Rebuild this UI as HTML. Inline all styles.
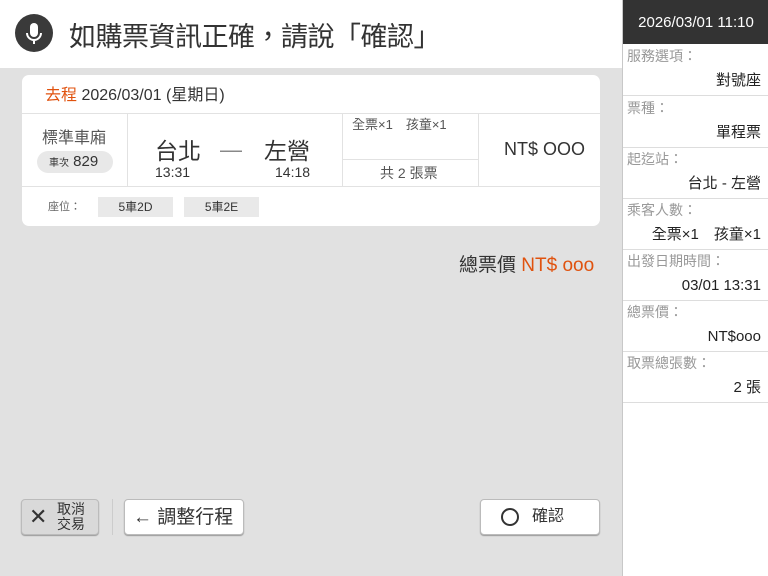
<!DOCTYPE html>
<html><head><meta charset="utf-8"><style>
*{margin:0;padding:0;box-sizing:border-box;line-height:1}
body{width:768px;height:576px;overflow:hidden;background:#e1e1e1;font-family:"Liberation Sans","Noto Sans CJK TC",sans-serif;color:#333;position:relative}
.a{position:absolute;white-space:nowrap}
#hdr{left:0;top:0;width:622px;height:68px;background:#fff}
#side{left:622px;top:0;width:146px;height:576px;background:#fff;border-left:1px solid #c8c8c8}
.card{left:22px;top:75px;width:578px;height:151px;background:#fff;border-radius:7px}
.l{position:absolute;background:#e2e2e2}
.sr{position:absolute;left:0;width:146px;height:52px;border-bottom:1px solid #ddd}
.sr .k{position:absolute;left:4px;top:5px;font-size:14px;color:#999}
.sr .v{position:absolute;right:8px;top:29px;font-size:15px;color:#222}
.btn{position:absolute;background:#fff;border:1px solid #bbb;border-radius:4px;box-shadow:0 1px 1px #999}
</style></head><body>
<div class="a" id="hdr"></div>
<div class="a" style="left:15px;top:14px;width:38px;height:38px;border-radius:50%;background:#3a3a3a">
<svg width="38" height="38" viewBox="0 0 38 38"><rect x="15" y="9" width="8" height="14" rx="4" fill="#fff"/><path d="M12 19a7 7 0 0 0 14 0M19 26v4" stroke="#fff" stroke-width="2" fill="none"/></svg></div>
<div class="a" style="left:69px;top:24px;font-size:27px;color:#333;letter-spacing:-0.5px">如購票資訊正確，請說「確認」</div>

<div class="a card">
<div class="a" style="left:23px;top:13px;font-size:16px"><span style="color:#e0520e">去程</span> 2026/03/01 (星期日)</div>
<div class="l" style="left:0;top:38px;width:578px;height:1px"></div>
<div class="l" style="left:0;top:111px;width:578px;height:1px"></div>
<div class="l" style="left:105px;top:38px;width:1px;height:73px"></div>
<div class="l" style="left:320px;top:38px;width:1px;height:73px"></div>
<div class="l" style="left:456px;top:38px;width:1px;height:73px"></div>
<div class="l" style="left:320px;top:84px;width:136px;height:1px"></div>
<div class="a" style="left:20px;top:56px;font-size:16px;color:#555">標準車廂</div>
<div class="a" style="left:15px;top:76px;width:76px;height:22px;border-radius:11px;background:#e8e8e8;font-size:15px;padding-left:12px;line-height:22px"><span style="font-size:10px;line-height:22px">車次</span> 829</div>
<div class="a" style="left:133px;top:65px;font-size:23px">台北</div>
<div class="a" style="left:198px;top:64px;font-size:22px;color:#888">—</div>
<div class="a" style="left:242px;top:65px;font-size:23px">左營</div>
<div class="a" style="left:133px;top:90px;font-size:14px">13:31</div>
<div class="a" style="left:253px;top:90px;font-size:14px">14:18</div>
<div class="a" style="left:330px;top:43px;font-size:13px;color:#555">全票×1　孩童×1</div>
<div class="a" style="left:358px;top:91px;font-size:14px;color:#555">共 2 張票</div>
<div class="a" style="left:482px;top:65px;font-size:18px">NT$ OOO</div>
<div class="a" style="left:26px;top:127px;font-size:11px;color:#666">座位：</div>
<div class="a" style="left:76px;top:122px;width:75px;height:20px;background:#e9e9e9;font-size:12px;text-align:center;line-height:20px">5車2D</div>
<div class="a" style="left:162px;top:122px;width:75px;height:20px;background:#e9e9e9;font-size:12px;text-align:center;line-height:20px">5車2E</div>
</div>
<div class="a" style="left:459px;top:256px;font-size:19px">總票價 <span style="color:#e0520e">NT$ ooo</span></div>

<div class="btn" style="left:21px;top:499px;width:78px;height:36px;background:#d9d9d9"><div class="a" style="left:7px;top:6px;font-size:22px">✕</div><div class="a" style="left:35px;top:2px;font-size:14px;line-height:15px">取消<br>交易</div></div>
<div class="a" style="left:112px;top:499px;width:1px;height:36px;background:#ccc"></div>
<div class="btn" style="left:124px;top:499px;width:120px;height:36px"><div class="a" style="left:8px;top:8px;font-size:19px">←&nbsp;調整行程</div></div>
<div class="btn" style="left:480px;top:499px;width:120px;height:36px"><div class="a" style="left:20px;top:8px;width:18px;height:18px;border:2px solid #333;border-radius:50%"></div><div class="a" style="left:51px;top:9px;font-size:16px">確認</div></div>

<div class="a" id="side">
<div class="a" style="left:0;top:0;width:146px;height:44px;background:#333;color:#fff;font-size:15px;line-height:46px;text-align:center">2026/03/01 11:10</div>
<div class="sr" style="top:44px"><div class="k">服務選項：</div><div class="v">對號座</div></div>
<div class="sr" style="top:96px"><div class="k">票種：</div><div class="v">單程票</div></div>
<div class="sr" style="top:147px"><div class="k">起迄站：</div><div class="v">台北 - 左營</div></div>
<div class="sr" style="top:198px"><div class="k">乘客人數：</div><div class="v">全票×1　孩童×1</div></div>
<div class="sr" style="top:249px"><div class="k">出發日期時間：</div><div class="v">03/01 13:31</div></div>
<div class="sr" style="top:300px"><div class="k">總票價：</div><div class="v">NT$ooo</div></div>
<div class="sr" style="top:351px"><div class="k">取票總張數：</div><div class="v">2 張</div></div>
</div>
</body></html>
